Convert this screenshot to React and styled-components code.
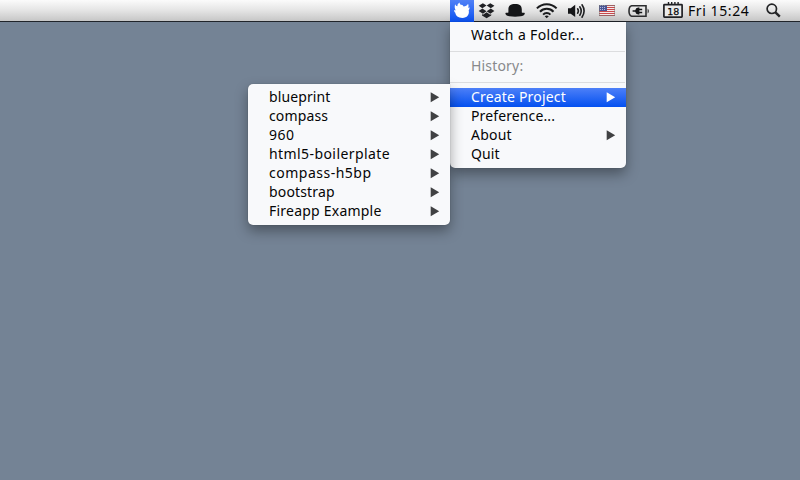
import React from 'react';
import styled, { createGlobalStyle } from 'styled-components';

const GlobalStyle = createGlobalStyle`
  * { box-sizing: border-box; }
  body { margin: 0; overflow: hidden; background: #748395; }
`;

const Desktop = styled.div`
  position: relative;
  width: 800px;
  height: 480px;
  overflow: hidden;
  background: #748395;
  font: 14px/17px 'Noto Sans', 'Open Sans', sans-serif;
  color: #050506;
`;

const MenuBar = styled.header`
  display: flex;
  justify-content: flex-end;
  height: 22px;
  padding-right: 18px;
  background: linear-gradient(#fbfbfb, #e4e4e4 50%, #c6c6c6);
  border-bottom: 1px solid #20242a;
`;

const StatusItem = styled.div`
  display: flex;
  flex: none;
  align-items: flex-start;
  width: ${(p) => p.$width}px;
  height: ${(p) => (p.$active ? 22 : 21)}px;
  background: ${(p) => (p.$active ? 'linear-gradient(#5181f6, #0a51f2)' : 'none')};
  svg { display: block; flex: none; }
`;

const Clock = styled.div`
  flex: none;
  width: 77px;
  line-height: 21px;
  white-space: nowrap;
  letter-spacing: 0.58px;
`;

const Menu = styled.nav`
  position: absolute;
  top: ${(p) => p.$top}px;
  left: ${(p) => p.$left}px;
  width: ${(p) => p.$width}px;
  padding: 4px 0;
  background: #f8f9fb;
  border-radius: ${(p) => (p.$attached ? '0 0 5px 5px' : '5px 0 5px 5px')};
  box-shadow: 0 6px 13px rgba(0, 0, 0, 0.36), 0 0 1px rgba(0, 0, 0, 0.35);
`;

const MenuRow = styled.div`
  display: flex;
  align-items: center;
  justify-content: space-between;
  height: 19px;
  padding: 0 10px 0 21px;
  color: ${(p) => (p.$active ? '#fff' : p.$muted ? '#88898b' : '#050506')};
  background: ${(p) => (p.$active ? 'linear-gradient(#4d80f8, #0450f0)' : 'none')};
`;

const Label = styled.span`
  padding-bottom: 2px;
  white-space: nowrap;
  letter-spacing: ${(p) => p.$track || 0}px;
`;

const Divider = styled.div`
  height: 1px;
  margin: 6px 1px 5px 0;
  background: #dcdddf;
`;

const Arrow = ({ light }) => (
  <svg width="10" height="11" viewBox="0 0 10 11">
    <path d="M0.7 0.3L9.2 5.3L0.7 10.3Z" fill={light ? '#fff' : '#404143'} />
  </svg>
);

const Row = ({ label, track, arrow, active, muted }) => (
  <MenuRow $active={active} $muted={muted}>
    <Label $track={track}>{label}</Label>
    {arrow && <Arrow light={active} />}
  </MenuRow>
);

const FlameIcon = () => (
  <svg width="24" height="22" viewBox="0 0 24 22">
    <path fill="#fff" d="M5.2 4.2C5.6 5.4 6.4 6 7.4 6.2C7.3 4.7 8.1 3.3 9.8 2.6C9.5 3.8 10 4.6 11.2 4.8C12.6 5 13.2 5.6 13.6 6.6C15.4 6.6 17.2 5.6 18 3.8C18.7 5.2 18.7 6.6 18.2 7.8C18.7 7.8 19.2 7.6 19.6 7.2C19.6 8.6 19.2 9.6 18.7 10.2C19.7 14.6 17 17.9 12.4 17.9C8.2 17.9 5.6 15.8 5.3 12.8C4.5 12.1 4 11.1 4 10C4.6 10.4 5.2 10.5 5.6 10.3C4.6 8.3 4.4 6 5.2 4.2Z" />
  </svg>
);

const DropboxIcon = () => (
  <svg width="28" height="22" viewBox="0 0 28 22">
    <g fill="#202124">
      <path d="M8.9 3.2L12.5 5.6L8.4 8.3L4.7 5.7Z" />
      <path d="M16.3 3.2L20.4 5.7L16.8 8.3L12.7 5.6Z" />
      <path d="M8.4 8.6L12.5 11.3L8.9 13.7L4.7 11.1Z" />
      <path d="M16.8 8.6L20.4 11.1L16.3 13.7L12.7 11.3Z" />
      <path d="M8 14.1L9 14.7L12.6 12.3L16.2 14.7L17.2 14.1V15.6L12.6 18.3L8 15.6Z" />
    </g>
  </svg>
);

const HatIcon = () => (
  <svg width="34" height="22" viewBox="0 0 34 22">
    <path fill="#151618" d="M6.4 12.6V9.5C6.4 5.6 8.6 4 13.1 4C17.6 4 19.8 5.6 19.8 9.5V12.6C21 13 22.4 12.4 22.8 13.2C23 14.9 20.6 15.9 18.7 16.3C15 16.9 11.2 16.9 7.5 16.3C5.6 15.9 3.2 14.9 3.4 13.2C3.8 12.4 5.2 13 6.4 12.6Z" />
  </svg>
);

const WifiIcon = () => (
  <svg width="31" height="22" viewBox="0 0 31 22">
    <g fill="none" stroke="#1a1b1d" strokeWidth="2">
      <path d="M0.9 8.4C6.2 2.7 15.3 2.7 20.6 8.4" />
      <path d="M4 11.7C7.6 7.8 13.9 7.8 17.5 11.7" />
      <path d="M7.1 14.6C9.1 12.5 12.4 12.5 14.4 14.6" />
    </g>
    <path d="M8.7 16.2Q10.7 14.6 12.8 16.2L10.7 18.3Z" fill="#1a1b1d" />
  </svg>
);

const VolumeIcon = () => (
  <svg width="32" height="22" viewBox="0 0 32 22">
    <path d="M1 8.2H3.7L8.2 4.8V17L3.7 13.7H1Z" fill="#151618" />
    <g fill="none" stroke="#1f2022" strokeWidth="1.6" strokeLinecap="round">
      <path d="M10.6 8.8Q12.2 11 10.6 13.2" />
      <path d="M12.8 6.8Q15.6 11 12.8 15.2" />
      <path d="M15 4.8Q19.2 11 15 17.2" />
    </g>
  </svg>
);

const FlagIcon = () => (
  <svg width="29" height="22" viewBox="0 0 29 22">
    <rect x="0" y="5" width="16" height="11" fill="#f3e9e9" />
    {[5, 7, 9, 11, 13, 15].map((y) => (
      <rect key={y} x="0" y={y} width="16" height="1" fill="#c9484c" />
    ))}
    <rect x="0" y="5" width="8" height="6" fill="#4a5596" />
    {[6, 8, 10].map((y) => (
      <path key={y} d={`M1 ${y - 0.5}h6`} stroke="#b4bbdc" strokeDasharray="1 1" />
    ))}
    <rect x="0.25" y="5.25" width="15.5" height="10.5" fill="none" stroke="#777" strokeWidth="0.5" />
  </svg>
);

const BatteryIcon = () => (
  <svg width="35" height="22" viewBox="0 0 35 22">
    <path d="M3.6 5.8H18V16.2H3.6Q1 15.6 1 11Q1 6.4 3.6 5.8Z" fill="none" stroke="#2c2d2f" strokeWidth="1.6" />
    <path d="M19.6 8.4Q22.2 11 19.6 13.6Z" fill="#2c2d2f" />
    <path d="M4.6 10.2H7.2Q7.8 7.6 10.2 7.6H11.4V8.8H14.2V10.2H11.4V11.8H14.2V13.2H11.4V14.4H10.2Q7.8 14.4 7.2 11.8H4.6Z" fill="#151618" />
  </svg>
);

const CalendarIcon = () => (
  <svg width="25" height="22" viewBox="0 0 25 22">
    <rect x="0.9" y="4.6" width="18.2" height="12.6" rx="0.6" fill="#ececec" stroke="#202124" strokeWidth="1.7" />
    <path d="M5.5 2V4M8.7 2V4M11.9 2V4M15.1 2V4" stroke="#202124" strokeWidth="1.4" />
    <text x="10.3" y="14.6" textAnchor="middle" fontFamily="'DejaVu Sans', sans-serif" fontSize="9.5" fill="#08090b" stroke="#08090b" strokeWidth="0.25">18</text>
  </svg>
);

const SearchIcon = () => (
  <svg width="17" height="22" viewBox="0 0 17 22">
    <circle cx="6.8" cy="8.8" r="4.7" fill="none" stroke="#242527" strokeWidth="1.7" />
    <path d="M10.2 12.2L14.8 16.7" stroke="#242527" strokeWidth="2.4" />
  </svg>
);

const projects = [
  { label: 'blueprint', track: 0.1 },
  { label: 'compass', track: 0.15 },
  { label: '960', track: 0.5 },
  { label: 'html5-boilerplate', track: 0.42 },
  { label: 'compass-h5bp', track: 0.5 },
  { label: 'bootstrap', track: 0.15 },
  { label: 'Fireapp Example', track: 0.22 },
];

export default function App() {
  return (
    <Desktop>
      <GlobalStyle />
      <Menu $top={22} $left={450} $width={176} $attached>
        <Row label="Watch a Folder..." track={0.37} />
        <Divider />
        <Row label="History:" track={0.18} muted />
        <Divider />
        <Row label="Create Project" track={0.18} active arrow />
        <Row label="Preference..." track={0.12} />
        <Row label="About" track={0.2} arrow />
        <Row label="Quit" track={0.1} />
      </Menu>
      <Menu $top={84} $left={248} $width={202}>
        {projects.map((p) => <Row key={p.label} {...p} arrow />)}
      </Menu>
      <MenuBar>
        <StatusItem $width={24} $active><FlameIcon /></StatusItem>
        <StatusItem $width={28}><DropboxIcon /></StatusItem>
        <StatusItem $width={34}><HatIcon /></StatusItem>
        <StatusItem $width={31}><WifiIcon /></StatusItem>
        <StatusItem $width={32}><VolumeIcon /></StatusItem>
        <StatusItem $width={29}><FlagIcon /></StatusItem>
        <StatusItem $width={35}><BatteryIcon /></StatusItem>
        <StatusItem $width={25}><CalendarIcon /></StatusItem>
        <Clock>Fri 15:24</Clock>
        <StatusItem $width={17}><SearchIcon /></StatusItem>
      </MenuBar>
    </Desktop>
  );
}
